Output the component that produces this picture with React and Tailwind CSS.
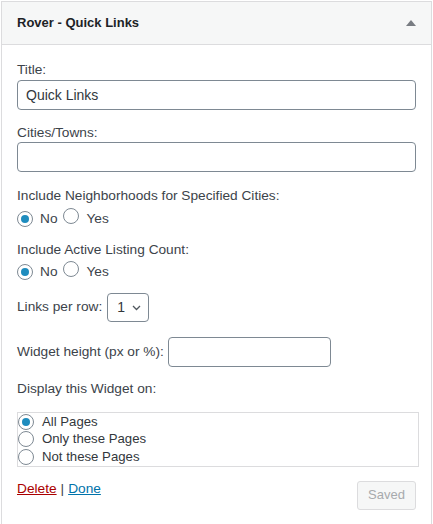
import React from "react";

function Radio({ checked }) {
  return (
    <span className="relative inline-flex h-4 w-4 shrink-0 items-center justify-center rounded-full border border-[#7e8993] bg-white">
      {checked && <span className="h-2 w-2 rounded-full bg-[#1e8cbe]" />}
    </span>
  );
}

export default function App() {
  return (
    <div
      className="bg-white pl-[1px] pt-[1px] text-[13.7px] text-[#3c434a]"
      style={{ fontFamily: '"Liberation Sans", Arial, sans-serif' }}
    >
      <div className="mr-[1px] border border-[#dcdcde] bg-white">
        <div className="flex h-[43px] items-center justify-between border-b border-[#dcdcde] bg-[#f6f7f7] pl-[15px] pr-[14px]">
          <h3 className="text-[13px] font-bold text-[#1d2327]">Rover - Quick Links</h3>
          <svg width="10" height="6" viewBox="0 0 10 6" className="mr-[1px]">
            <path d="M5 0 L10 6 L0 6 Z" fill="#787c82" />
          </svg>
        </div>

        <div className="px-[15px] pb-[15px]">
          <div className="mt-[16px] leading-[18px]">Title:</div>
          <input
            readOnly
            value="Quick Links"
            className="mt-[1px] block h-[30px] w-full rounded-[4px] border border-[#7e8993] px-[8px] text-[14px] text-[#32373c] outline-none"
            style={{ fontFamily: '"Liberation Sans", Arial, sans-serif' }}
          />

          <div className="mt-[14px] leading-[18px]">Cities/Towns:</div>
          <div className="mt-[0px] h-[30px] w-full rounded-[4px] border border-[#7e8993]" />

          <div className="mt-[15px] leading-[18px]">Include Neighborhoods for Specified Cities:</div>
          <div className="mt-[4px] flex h-[20px] items-center">
            <Radio checked />
            <span className="ml-[7px]">No</span>
            <span className="ml-[5px]"><Radio /></span>
            <span className="ml-[8px]">Yes</span>
          </div>

          <div className="mt-[12px] leading-[18px]">Include Active Listing Count:</div>
          <div className="mt-[3px] flex h-[20px] items-center">
            <Radio checked />
            <span className="ml-[7px]">No</span>
            <span className="ml-[5px]"><Radio /></span>
            <span className="ml-[8px]">Yes</span>
          </div>

          <div className="mt-[11px] flex items-center">
            <span>Links per row:</span>
            <div className="ml-[5px] flex h-[29px] w-[42px] items-center justify-between rounded-[4px] border border-[#7e8993] pl-[9px] pr-[7px] text-[14px] text-[#32373c]">
              <span>1</span>
              <svg width="9" height="6" viewBox="0 0 9 6">
                <path d="M1 1 L4.5 4.5 L8 1" fill="none" stroke="#50575e" strokeWidth="1.3" />
              </svg>
            </div>
          </div>

          <div className="mt-[15px] flex items-center">
            <span>Widget height (px or %):</span>
            <div className="ml-[4px] h-[30px] w-[163px] rounded-[4px] border border-[#7e8993]" />
          </div>

          <div className="mt-[13px] leading-[18px]">Display this Widget on:</div>

          <div className="mt-[14px] w-[402px] border border-[#dcdcde] text-[13.2px] text-[#32373c]">
            <div className="flex h-[17.5px] items-center">
              <Radio checked />
              <span className="ml-[8px]">All Pages</span>
            </div>
            <div className="flex h-[17.5px] items-center">
              <Radio />
              <span className="ml-[8px]">Only these Pages</span>
            </div>
            <div className="flex h-[17.5px] items-center">
              <Radio />
              <span className="ml-[8px]">Not these Pages</span>
            </div>
          </div>

          <div className="mt-[14px] flex items-start justify-between">
            <div className="leading-[16px]">
              <a className="text-[#a00] underline">Delete</a>
              <span className="mx-[4px]">|</span>
              <a className="text-[#0073aa] underline">Done</a>
            </div>
            <div className="flex h-[29px] w-[59px] items-center justify-center rounded-[3px] border border-[#dcdcde] bg-[#f6f7f7] text-[13px] text-[#a7aaad]">
              Saved
            </div>
          </div>
        </div>
      </div>
    </div>
  );
}
